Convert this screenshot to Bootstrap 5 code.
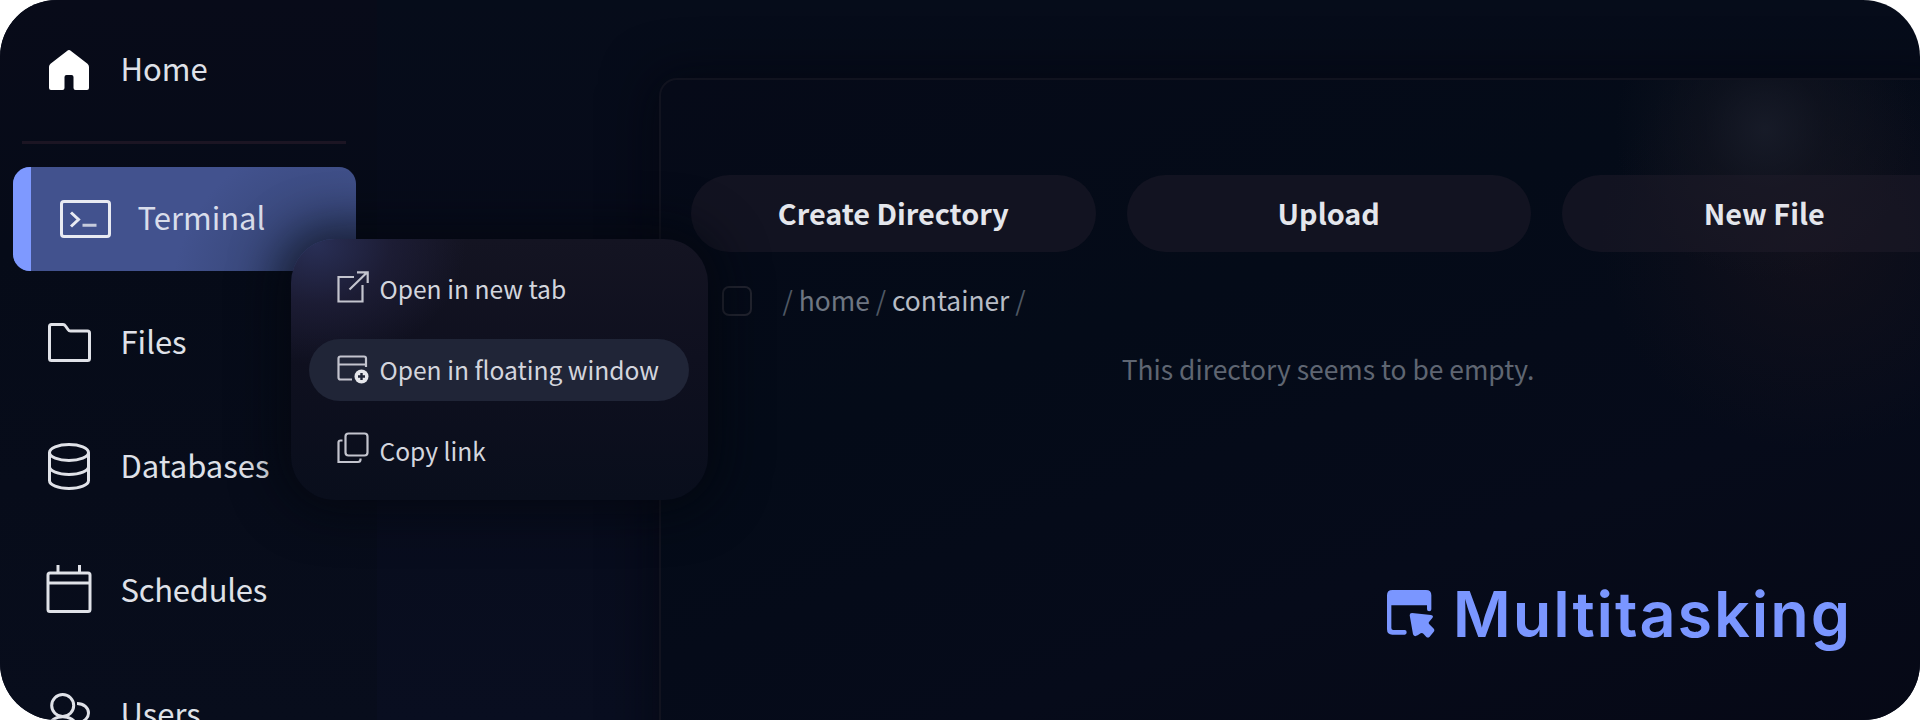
<!DOCTYPE html>
<html lang="en">
<head>
<meta charset="utf-8">
<meta name="viewport" content="width=device-width, initial-scale=1">
<title>Multitasking</title>
<link href="https://cdn.jsdelivr.net/npm/bootstrap@5.3.0/dist/css/bootstrap.min.css" rel="stylesheet">
<style>
  body { background: #fff; font-family: "Noto Sans CJK SC", "Noto Sans", sans-serif; color: #dfe1e8; }
  svg { display: block; flex: none; overflow: visible; }
  .stage {
    width: 1920px; height: 720px; border-radius: 57px;
    background: linear-gradient(180deg, #060c1a 0%, #070b1a 35%, #090e20 100%);
  }
  .side { width: 377px; padding: 17.5px 21px 0 13px; background: linear-gradient(180deg, #080b19, #060b18 35%, #080d1c); }
  .side-row { height: 104.5px; margin-bottom: 19.5px; font-size: 31px; line-height: 1; white-space: nowrap; padding-left: 33px; }
  .side-row .ico { width: 46px; margin-right: 28.5px; display: flex; justify-content: center; }
  .side-row .txt { padding-bottom: 4.5px; }
  .side-sep { height: 3px; margin: 18.5px 10px 23px 9px; background: #1c1523; }
  .side-row.current {
    border-radius: 17px; padding-left: 46.5px; color: #d9ddeb; position: relative;
    background: radial-gradient(circle at 310px 125px, #33406c 0, #384779 60px, #42528e 150px);
  }
  .side-row.current::before { content: ""; position: absolute; left: 0; top: 0; bottom: 0; width: 18px; border-radius: 17px 0 0 17px; background: #7e99ff; }
  .side-row.current .ico { width: 51px; margin-right: 27px; }

  .work { padding: 77.5px 0 0 282px; min-width: 0; }
  .pane {
    height: 700px; width: 1300px; border: 2px solid #11131f; border-right: 0; border-radius: 18px 0 0 0; padding: 95.500px 0 0 30px;
    box-shadow: -4px 0 50px 2px rgba(3, 5, 13, .6);
    background:
      radial-gradient(circle at 1104px 50px, rgba(25, 29, 42, .85) 0, rgba(20, 23, 34, .5) 60px, rgba(15, 18, 28, 0) 150px),
      radial-gradient(ellipse 210px 210px at 1150px 160px, rgba(22, 18, 28, .75), rgba(22, 18, 28, 0)),
      linear-gradient(160deg, #060a18 0%, #040b18 35%, #060b1a 65%, #060815 100%);
  }
  .act { width: 404.5px; height: 77px; border-radius: 38.5px; background: rgba(31, 27, 41, .5); color: #e4e6ec; font-size: 28.8px; font-weight: 700; line-height: 1; flex: none; padding: 0 0 1px; border: 0; }
  .act:hover { background: #1b1a28; color: #fff; }
  .pick { width: 30px; height: 30px; border: 2px solid #22242f; border-radius: 7px; flex: none; }
  .path { font-size: 26.4px; line-height: 32px; color: #6e7682; margin: -2px 0 0 30.5px; }
  .path .sep { color: #4f5864; }
  .path .here { color: #b7bcc5; }
  .none { font-size: 26.4px; line-height: 32px; color: #5f6672; width: 1274px; }

  .menu {
    position: absolute; left: 290.5px; top: 239px; width: 417px; height: 261px; border-radius: 44px; padding: 19px 18.5px;
    background: radial-gradient(ellipse 150px 120px at 25px 5px, #292f56 0, rgba(32, 32, 60, .7) 50%, rgba(20, 20, 34, 0) 100%), linear-gradient(180deg, #141422 0%, #0f101f 45%, #090e1c 100%);
    box-shadow: 0 0 46px 14px rgba(4, 6, 14, .6);
  }
  .menu-row { height: 62px; margin-bottom: 19px; border-radius: 31px; padding-left: 28px; font-size: 24.6px; line-height: 1; white-space: nowrap; color: #d3d5dd; }
  .menu-row span { padding-bottom: 2px; }
  .menu-row.hot { background: #202537; }
  .menu-row svg { margin-right: 10.5px; }

  .tag { position: absolute; left: 1387px; top: 574px; color: #7a96ff; font: 600 63px/80px Inter, sans-serif; letter-spacing: 1.9px; }
</style>
</head>
<body>
<div class="stage d-flex position-relative overflow-hidden">
  <nav class="side flex-shrink-0">
    <div class="side-row d-flex align-items-center mb-0">
      <span class="ico"><svg width="40" height="40" viewBox="0 0 40 40" fill="#fff"><path d="M18 .9Q20-.7 22 .9L38.500 13.800Q40 15 40 17V38Q40 40 38 40H26.500Q24.500 40 24.500 38V27Q24.500 25 22.500 25H17.500Q15.500 25 15.500 27V38Q15.500 40 13.500 40H2Q0 40 0 38V17Q0 15 1.500 13.800Z"/></svg></span>
      <span class="txt">Home</span>
    </div>
    <div class="side-sep"></div>
    <div class="side-row current d-flex align-items-center">
      <span class="ico"><svg width="51" height="38" viewBox="0 0 51 38" fill="none" stroke="#e8eaf2" stroke-width="3"><rect x="1.500" y="1.500" width="48" height="35" rx="2.500"/><path d="M11 12.500L18.500 19.500L11 26.500"/><path d="M22.500 25.200H36.500" stroke="#c6cbdc"/></svg></span>
      <span class="txt">Terminal</span>
    </div>
    <div class="side-row d-flex align-items-center">
      <span class="ico"><svg width="43" height="39" viewBox="0 0 43 39" fill="none" stroke="#e0e2e8" stroke-width="3" stroke-linejoin="round"><path d="M3.500 1.500H15Q16.500 1.500 17.500 3L20 6.500Q21 8 22.500 8H39.500Q41.500 8 41.500 10V35.500Q41.500 37.500 39.500 37.500H3.500Q1.500 37.500 1.500 35.500V3.500Q1.500 1.500 3.500 1.500Z"/></svg></span>
      <span class="txt">Files</span>
    </div>
    <div class="side-row d-flex align-items-center">
      <span class="ico"><svg width="42" height="47" viewBox="0 0 42 47" fill="none" stroke="#e0e2e8" stroke-width="3"><ellipse cx="21" cy="9.500" rx="19.500" ry="8"/><path d="M1.500 9.500V37.500C1.500 42 10 45.500 21 45.500S40.500 42 40.500 37.500V9.500M1.500 23.500C1.500 28 10 31.500 21 31.500S40.500 28 40.500 23.500"/></svg></span>
      <span class="txt">Databases</span>
    </div>
    <div class="side-row d-flex align-items-center">
      <span class="ico" style="margin-top:-3px"><svg width="46" height="48" viewBox="0 0 46 48" fill="none" stroke="#e0e2e8" stroke-width="3"><rect x="2" y="8" width="42" height="38.500" rx="2"/><path d="M2 18H44M12 0V8M33.500 0V8"/></svg></span>
      <span class="txt" style="letter-spacing:-.25px">Schedules</span>
    </div>
    <div class="side-row d-flex align-items-center">
      <span class="ico" style="margin-top:3px"><svg width="46" height="46" viewBox="0 0 46 46" fill="none" stroke="#e0e2e8" stroke-width="3"><circle cx="16.700" cy="12.500" r="11"/><path d="M0 45C0 30 7 23.800 16.700 23.800S33 30 33 45M31 10.500C38 10.500 42.500 15 42.500 20C42.500 24 39.500 27 36 29"/></svg></span>
      <span class="txt">Users</span>
    </div>
  </nav>

  <main class="work flex-grow-1">
    <section class="pane">
      <div class="d-flex" style="gap:31px">
        <button class="btn act" type="button">Create Directory</button>
        <button class="btn act" type="button">Upload</button>
        <button class="btn act" type="button">New File</button>
      </div>
      <div class="d-flex align-items-center" style="padding:33.500px 0 0 31px">
        <span class="pick"></span>
        <div class="path"><span class="sep">/</span> home <span class="sep">/</span> <span class="here">container</span> <span class="sep">/</span></div>
      </div>
      <div class="none text-center" style="margin-top:37px">This directory seems to be empty.</div>
    </section>
  </main>

  <div class="menu">
    <div class="menu-row d-flex align-items-center">
      <svg width="32" height="32" viewBox="0 0 32 32" fill="none" stroke="#c3c4ce" stroke-width="2.200" style="margin-top:-5px"><path d="M17 6H1.500V30.500H25.500V14M12.500 18.500L30 1.500M20 1.300H30.700V12"/></svg>
      <span>Open in new tab</span>
    </div>
    <div class="menu-row hot d-flex align-items-center">
      <svg width="32" height="29" viewBox="0 0 32 29" fill="none" stroke="#c3c4ce" stroke-width="2.200" style="margin-top:-2px"><path d="M15 24.500H3.500Q1.500 24.500 1.500 22.500V3.500Q1.500 1.500 3.500 1.500H27Q29 1.500 29 3.500V12M1.500 9.500H29"/><circle cx="24.500" cy="21.500" r="7" fill="#e6e7ec" stroke="none"/><path d="M24.500 18V25M21 21.500H28" stroke="#202537" stroke-width="2.400"/></svg>
      <span>Open in floating window</span>
    </div>
    <div class="menu-row d-flex align-items-center">
      <svg width="32" height="32" viewBox="0 0 32 32" fill="none" stroke="#c3c4ce" stroke-width="2.200" style="margin-top:-7px"><rect x="8.500" y="1.500" width="22" height="22" rx="3"/><path d="M5.500 8.500H3.500Q1.500 8.500 1.500 10.500V30H21Q23.500 30 23.500 27.500V26.500"/></svg>
      <span>Copy link</span>
    </div>
  </div>

  <div class="tag d-flex align-items-center">
    <svg width="47.700" height="48" viewBox="22 33 143 144" fill="currentColor"><path d="M38 33H139Q155 33 155 49V91Q155 97 148.500 97T142 91V79H35V147Q35 153 41 153H75Q81 153 81 160T75 167H38Q22 167 22 151V49Q22 33 38 33Z"/><path d="M97 102L154 108Q163 110 158 117L148 129Q145 132 149 136L161 148Q167 154 161 160L150 173Q145 178 140 174L131 164Q127 160 123 163L114 169Q103 175 100 166L90 109Q90 102 97 102Z"/></svg>
    <span style="margin-left:18px">Multitasking</span>
  </div>
</div>
<script src="https://cdn.jsdelivr.net/npm/bootstrap@5.3.0/dist/js/bootstrap.bundle.min.js"></script>
</body>
</html>
